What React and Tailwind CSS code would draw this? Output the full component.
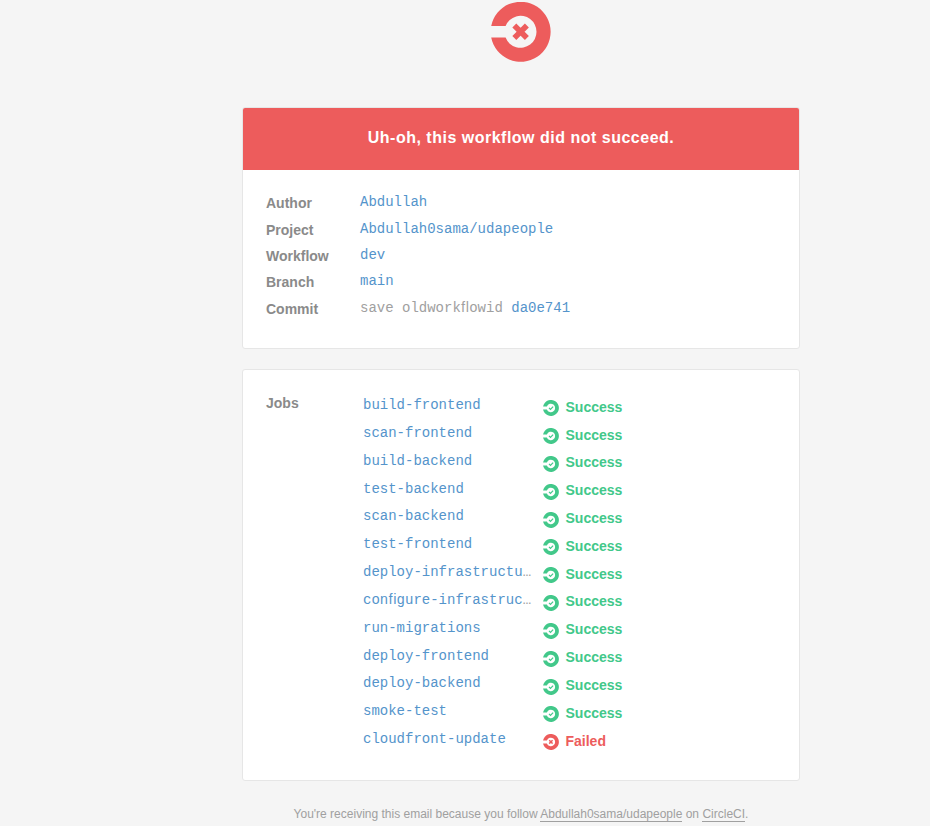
const mono = "font-['Liberation_Mono',monospace]";

const details = [
  { label: 'Author', value: 'Abdullah' },
  { label: 'Project', value: 'Abdullah0sama/udapeople' },
  { label: 'Workflow', value: 'dev' },
  { label: 'Branch', value: 'main' },
  { label: 'Commit', note: 'save oldworkflowid', value: 'da0e741' },
];

const jobs = [
  'build-frontend',
  'scan-frontend',
  'build-backend',
  'test-backend',
  'scan-backend',
  'test-frontend',
  'deploy-infrastructu…',
  'configure-infrastruc…',
  'run-migrations',
  'deploy-frontend',
  'deploy-backend',
  'smoke-test',
  'cloudfront-update',
];

// Uses the single-cell ligatures for "fi" and "fl" and greys the ellipsis.
function Code({ text }) {
  const [head, ...rest] = text.replace(/fi/g, '\uFB01').replace(/fl/g, '\uFB02').split('…');
  return (
    <>
      {head}
      {rest.length > 0 && <span className="text-[#a0a0a0]">…</span>}
    </>
  );
}

function StatusMark({ failed, className }) {
  return (
    <svg viewBox="0 0 60 60" className={className} fill="none" stroke="currentColor">
      <path
        fill="currentColor"
        stroke="none"
        d="M0.2 24 A30 30 0 1 1 0.2 35.6 L14.6 35.6 A16 16 0 1 0 14.6 24 Z"
      />
      {failed ? (
        <path d="M25.3 25.5 L33.9 34.1 M33.9 25.5 L25.3 34.1" strokeWidth="5.6" strokeLinecap="square" />
      ) : (
        <path d="M22.5 29.5 L28 35 L38 25" strokeWidth="4.6" />
      )}
    </svg>
  );
}

export default function App() {
  return (
    <div className="h-[826px] w-[930px] overflow-hidden bg-[#f5f5f5] pl-[242px] pt-[2px] font-['Liberation_Sans',Arial,sans-serif] text-sm">
      <div className="w-[558px]">
        <StatusMark failed className="ml-[249px] block size-[60px] text-[#ed5c5c]" />

        <section className="mt-[45px] h-[242px] overflow-hidden rounded-[3px] border border-[#e6e6e6] bg-white">
          <h1 className="h-[62px] bg-[#ed5c5c] text-center text-base leading-[60px] font-bold tracking-[0.5px] text-white">
            Uh-oh, this workflow did not succeed.
          </h1>
          <div className="px-[23px] pt-[20.2px]">
            {details.map((d) => (
              <div key={d.label} className="flex h-[26.4px] leading-[26px]">
                <div className="w-[94px] font-bold text-[#8a8a8a]">{d.label}</div>
                <div className={`${mono} -mt-px whitespace-pre text-[#5494cb]`}>
                  {d.note && <span className="text-[#a0a0a0]"><Code text={d.note} /> </span>}
                  {d.value}
                </div>
              </div>
            ))}
          </div>
        </section>

        <section className="mt-5 flex h-[412px] rounded-[3px] border border-[#e6e6e6] bg-white px-[23px] pt-[20px]">
          <div className="w-[97px] leading-[26px] font-bold text-[#8a8a8a]">Jobs</div>
          <div className="pt-[3px]">
            {jobs.map((job) => {
              const failed = job === 'cloudfront-update';
              return (
                <div key={job} className="flex h-[27.83px] leading-[26px]">
                  <div className={`${mono} -mt-[0.9px] w-[180px] text-[#5494cb]`}>
                    <Code text={job} />
                  </div>
                  <StatusMark
                    failed={failed}
                    className={`mt-[7.25px] size-4 ${failed ? 'text-[#ed5c5c]' : 'text-[#42c88a]'}`}
                  />
                  <div className={`mt-[0.68px] ml-[6.5px] font-bold ${failed ? 'pt-[0.2px] text-[#ed5c5c]' : 'text-[#42c88a]'}`}>
                    {failed ? 'Failed' : 'Success'}
                  </div>
                </div>
              );
            })}
          </div>
        </section>

        <p className="mt-[25px] text-center text-xs leading-4 text-[#a0a0a0]">
          You're receiving this email because you follow{' '}
          <a className="border-b border-[#a0a0a0]">Abdullah0sama/udapeople</a> on{' '}
          <a className="border-b border-[#a0a0a0]">CircleCI</a>.
        </p>
      </div>
    </div>
  );
}
